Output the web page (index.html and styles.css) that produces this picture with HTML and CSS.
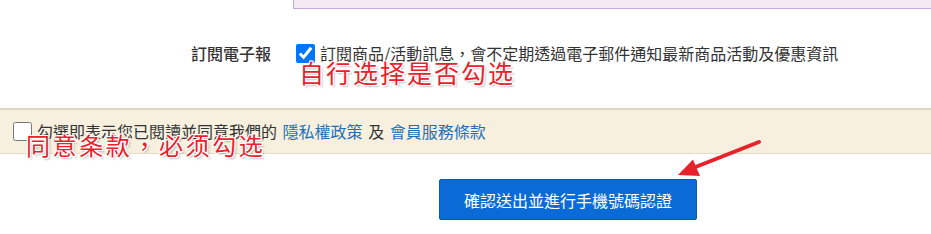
FILE: index.html
```html
<!DOCTYPE html>
<html lang="zh-Hant">
<head>
    <meta charset="UTF-8">
    <meta name="viewport" content="width=device-width, initial-scale=1.0">
    <title>會員註冊</title>
    <link rel="stylesheet" href="styles.css">
</head>
<body>
    <div class="notice-box"></div>

    <div class="form-row">
        <div class="form-label">訂閱電子報</div>
        <label class="form-field">
            <input type="checkbox" class="check" checked>
            <span>訂閱商品/活動訊息，會不定期透過電子郵件通知最新商品活動及優惠資訊</span>
        </label>
    </div>

    <div class="agree-bar">
        <label class="agree-field">
            <input type="checkbox" class="check">
            <span>勾選即表示您已閱讀並同意我們的 <a href="#">隱私權政策</a> 及 <a href="#">會員服務條款</a></span>
        </label>
    </div>

    <div class="actions">
        <button class="btn-submit" type="button">確認送出並進行手機號碼認證</button>
    </div>

    <!-- annotations drawn over the screenshot -->
    <div class="note note-subscribe">自行选择是否勾选</div>
    <div class="note note-agree">同意条款，必须勾选</div>
    <svg class="arrow" width="931" height="234" viewBox="0 0 931 234">
        <line x1="759" y1="142" x2="693" y2="168" stroke="#e8222b" stroke-width="4" stroke-linecap="round"/>
        <polygon points="678,175 693,159.5 700,176" fill="#e8222b"/>
    </svg>
</body>
</html>
```

FILE: styles.css
```css
:root {
    --color-text: #333333;
    --color-link: #1d6fb8;
    --color-band: #f7f0df;
    --color-band-border: #ddd5c3;
    --color-primary: #0b6bd6;
    --color-note: #e8222b;
}

body {
    font-family: 'Noto Sans CJK TC', 'Liberation Sans', sans-serif;
    font-size: 16px;
    color: var(--color-text);
    margin: 0;
    padding: 0;
    position: relative;
    width: 931px;
    height: 234px;
    overflow: hidden;
}

.notice-box {
    margin-left: 293px;
    height: 9px;
    box-sizing: border-box;
    background-color: #f4e8f3;
    border-left: 1px solid #caa6de;
    border-bottom: 1px solid #caa6de;
}

.form-row {
    display: grid;
    grid-template-columns: 293px 1fr;
    align-items: center;
    margin-top: 34px;
    height: 20px;
}

.form-label {
    text-align: right;
    padding-right: 22px;
    font-weight: 500;
    line-height: 20px;
}

.form-field,
.agree-field {
    display: flex;
    align-items: center;
    gap: 5px;
    line-height: 20px;
}

.check {
    width: 19px;
    height: 19px;
    margin: 0;
    flex-shrink: 0;
}

.form-field .check {
    margin-left: 3px;
}

.agree-bar {
    margin-top: 45px;
    background-color: var(--color-band);
    border-top: 2px solid var(--color-band-border);
    border-bottom: 1px solid #e3dbc8;
    padding: 11px 13px 12px;
}

.agree-field a {
    color: var(--color-link);
    text-decoration: none;
    margin: 0 2px;
}

.actions {
    margin-top: 25px;
    padding-left: 439px;
}

.btn-submit {
    width: 258px;
    height: 41px;
    font-family: inherit;
    font-size: 16px;
    color: #ffffff;
    background-color: var(--color-primary);
    border: 1px solid #0a58b5;
    border-radius: 2px;
    cursor: pointer;
}

.note {
    position: absolute;
    color: var(--color-note);
    font-family: 'Noto Sans CJK SC', sans-serif;
    line-height: 1;
    white-space: nowrap;
    text-shadow:
        1px 0 0 #fff, -1px 0 0 #fff, 0 1px 0 #fff, 0 -1px 0 #fff,
        1px 1px 0 #fff, -1px -1px 0 #fff, 1px -1px 0 #fff, -1px 1px 0 #fff,
        2px 2px 2px rgba(0, 0, 0, 0.25);
}

.note-subscribe {
    left: 299px;
    top: 60px;
    font-size: 25px;
    letter-spacing: 2px;
}

.note-agree {
    left: 26px;
    top: 133px;
    font-size: 24px;
    letter-spacing: 2.6px;
}

.arrow {
    position: absolute;
    left: 0;
    top: 0;
    pointer-events: none;
}
```
